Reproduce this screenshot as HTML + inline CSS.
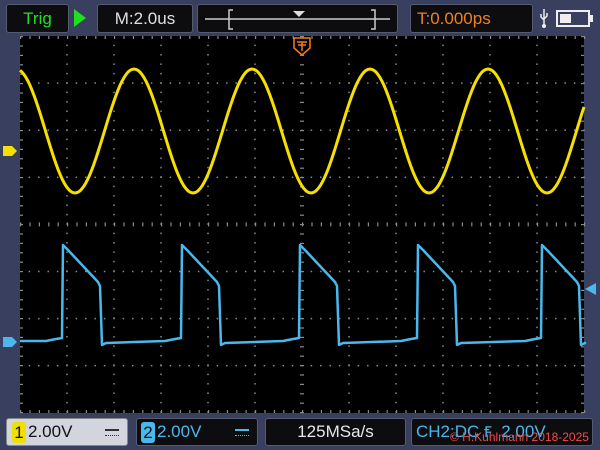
<!DOCTYPE html>
<html><head><meta charset="utf-8"><style>
body{margin:0;width:600px;height:450px;background:#383f5f;overflow:hidden;font-family:"Liberation Sans",sans-serif;position:relative}
.b{position:absolute;background:#0d0d10;border:1px solid #555b70;border-radius:3px;box-sizing:border-box;font-size:17px;line-height:26px}
</style></head><body>
<div class="b" style="left:6px;top:4px;width:63px;height:29px;color:#22e022;text-align:center;line-height:27px">Trig</div>
<svg style="position:absolute;left:73px;top:8px" width="14" height="20"><polygon points="1,1 13,10 1,19" fill="#1ee01e"/></svg>
<div class="b" style="left:97px;top:4px;width:96px;height:29px;color:#e0e0e0;text-align:center;line-height:27px">M:2.0us</div>
<div class="b" style="left:197px;top:4px;width:201px;height:29px">
<svg width="200" height="28" style="position:absolute;left:0;top:0"><line x1="7" y1="14" x2="192" y2="14" stroke="#ccc" stroke-width="1.5"/><path d="M35 5h-4v19h4M173 5h4v19h-4" stroke="#ccc" fill="none" stroke-width="1.5"/><polygon points="95,6 107,6 101,12" fill="#ddd"/></svg></div>
<div class="b" style="left:410px;top:4px;width:123px;height:29px;color:#f08020;padding-left:6px;line-height:27px">T:0.000ps</div>
<svg style="position:absolute;left:538px;top:6px" width="60" height="26"><path d="M6 3v17M3 8v3l3 3M9 7v3l-3 3" stroke="#eee" fill="none" stroke-width="1.5"/><circle cx="6" cy="20" r="2" fill="#eee"/><rect x="19" y="5" width="32" height="15" fill="none" stroke="#eee" stroke-width="2"/><rect x="22" y="8" width="11" height="9" fill="#eee"/><rect x="51" y="9" width="4" height="7" fill="#eee"/></svg>
<svg id="s" style="position:absolute;left:0;top:0" width="600" height="450"></svg>
<div class="b" style="left:6px;top:418px;width:122px;height:28px;background:#d2d5de;color:#111;border-color:#888">
<span style="position:absolute;left:5px;top:3px;width:14px;height:21px;background:#f0e000;border-radius:3px;line-height:21px;text-align:center">1</span><span style="position:absolute;left:21px;top:0">2.00V</span><span style="position:absolute;right:8px;top:10px;width:14px;height:4px;border-top:2px solid #333;border-bottom:1px dotted #333"></span></div>
<div class="b" style="left:136px;top:418px;width:122px;height:28px;color:#4ab8ec">
<span style="position:absolute;left:4px;top:3px;width:14px;height:21px;background:#4ab8ec;color:#111;border-radius:3px;line-height:21px;text-align:center">2</span><span style="position:absolute;left:20px;top:0">2.00V</span><span style="position:absolute;right:8px;top:10px;width:14px;height:4px;border-top:2px solid #4ab8ec;border-bottom:1px dotted #4ab8ec"></span></div>
<div class="b" style="left:265px;top:418px;width:141px;height:28px;color:#e8e8e8;text-align:center">125MSa/s</div>
<div class="b" style="left:411px;top:418px;width:182px;height:28px;color:#4ab8ec;padding-left:4px">CH2:DC <span style="font-size:15px">Ꞙ</span> &nbsp;2.00V</div>
<div style="position:absolute;left:450px;top:430px;font-size:12px;color:#f04a4a">© H.Kuhlmann 2018-2025</div>
<script>
var s='<rect x="20" y="36" width="564" height="377" fill="#000"/>';
var X0=20,Y0=36,W=564,H=377,dx=47,dy=47.1;
var g='#8a8a8a';
for(var i=1;i<12;i++){var x=X0+i*dx;if(i==6)continue;for(var y=Y0+9.4;y<Y0+H;y+=9.4)s+='<rect x="'+(x-0.75)+'" y="'+(y-0.75)+'" width="1.5" height="1.5" fill="'+g+'"/>';}
for(var j=1;j<8;j++){var y=Y0+j*dy;if(j==4)continue;for(var x=X0+9.4;x<X0+W;x+=9.4)s+='<rect x="'+(x-0.75)+'" y="'+(y-0.75)+'" width="1.5" height="1.5" fill="'+g+'"/>';}
for(var x=X0;x<X0+W;x+=9.4){s+='<rect x="'+x+'" y="'+Y0+'" width="1.2" height="3" fill="'+g+'"/><rect x="'+x+'" y="'+(Y0+H-3)+'" width="1.2" height="3" fill="'+g+'"/><rect x="'+x+'" y="'+(Y0+4*dy-2)+'" width="1.2" height="4" fill="'+g+'"/>';}
for(var y=Y0;y<Y0+H;y+=9.4){s+='<rect x="'+X0+'" y="'+y+'" width="3" height="1.2" fill="'+g+'"/><rect x="'+(X0+W-3)+'" y="'+y+'" width="3" height="1.2" fill="'+g+'"/><rect x="'+(X0+6*dx-2)+'" y="'+y+'" width="4" height="1.2" fill="'+g+'"/>';}
var p='M';for(var x=20;x<=584;x+=2){p+=x+' '+(131-62*Math.cos(2*Math.PI*(x-134)/118)).toFixed(1)+' ';}
s+='<path d="'+p+'" stroke="#f5e000" stroke-width="3" fill="none"/>';
var q='M20 341 ';var e=[62,181,299,417,541];
e.forEach(function(x){q+='L'+(x-16)+' 341 L'+(x-6)+' 339 L'+x+' 338 L'+(x+1)+' 245 L'+(x+6)+' 250 L'+(x+36)+' 282 L'+(x+38)+' 286 L'+(x+40)+' 345 L'+(x+44)+' 343 ';});
q+='L584 343';
s+='<path d="'+q+'" stroke="#4ab8ec" stroke-width="2.5" fill="none" stroke-linejoin="round"/>';
s+='<polygon points="3,146 12,146 17,151 12,156 3,156" fill="#f5e000"/>';
s+='<polygon points="3,337 12,337 17,342 12,347 3,347" fill="#4ab8ec"/>';
s+='<polygon points="585,289 596,283 596,295" fill="#4ab8ec"/>';
s+='<path d="M294 38h16v10l-8 7-8-7z" fill="#000" stroke="#f08020" stroke-width="1.5"/><path d="M297 42h10M302 42v9M298 45h8" stroke="#f08020" stroke-width="1.5"/>';
document.getElementById('s').innerHTML=s;
</script>
</body></html>
